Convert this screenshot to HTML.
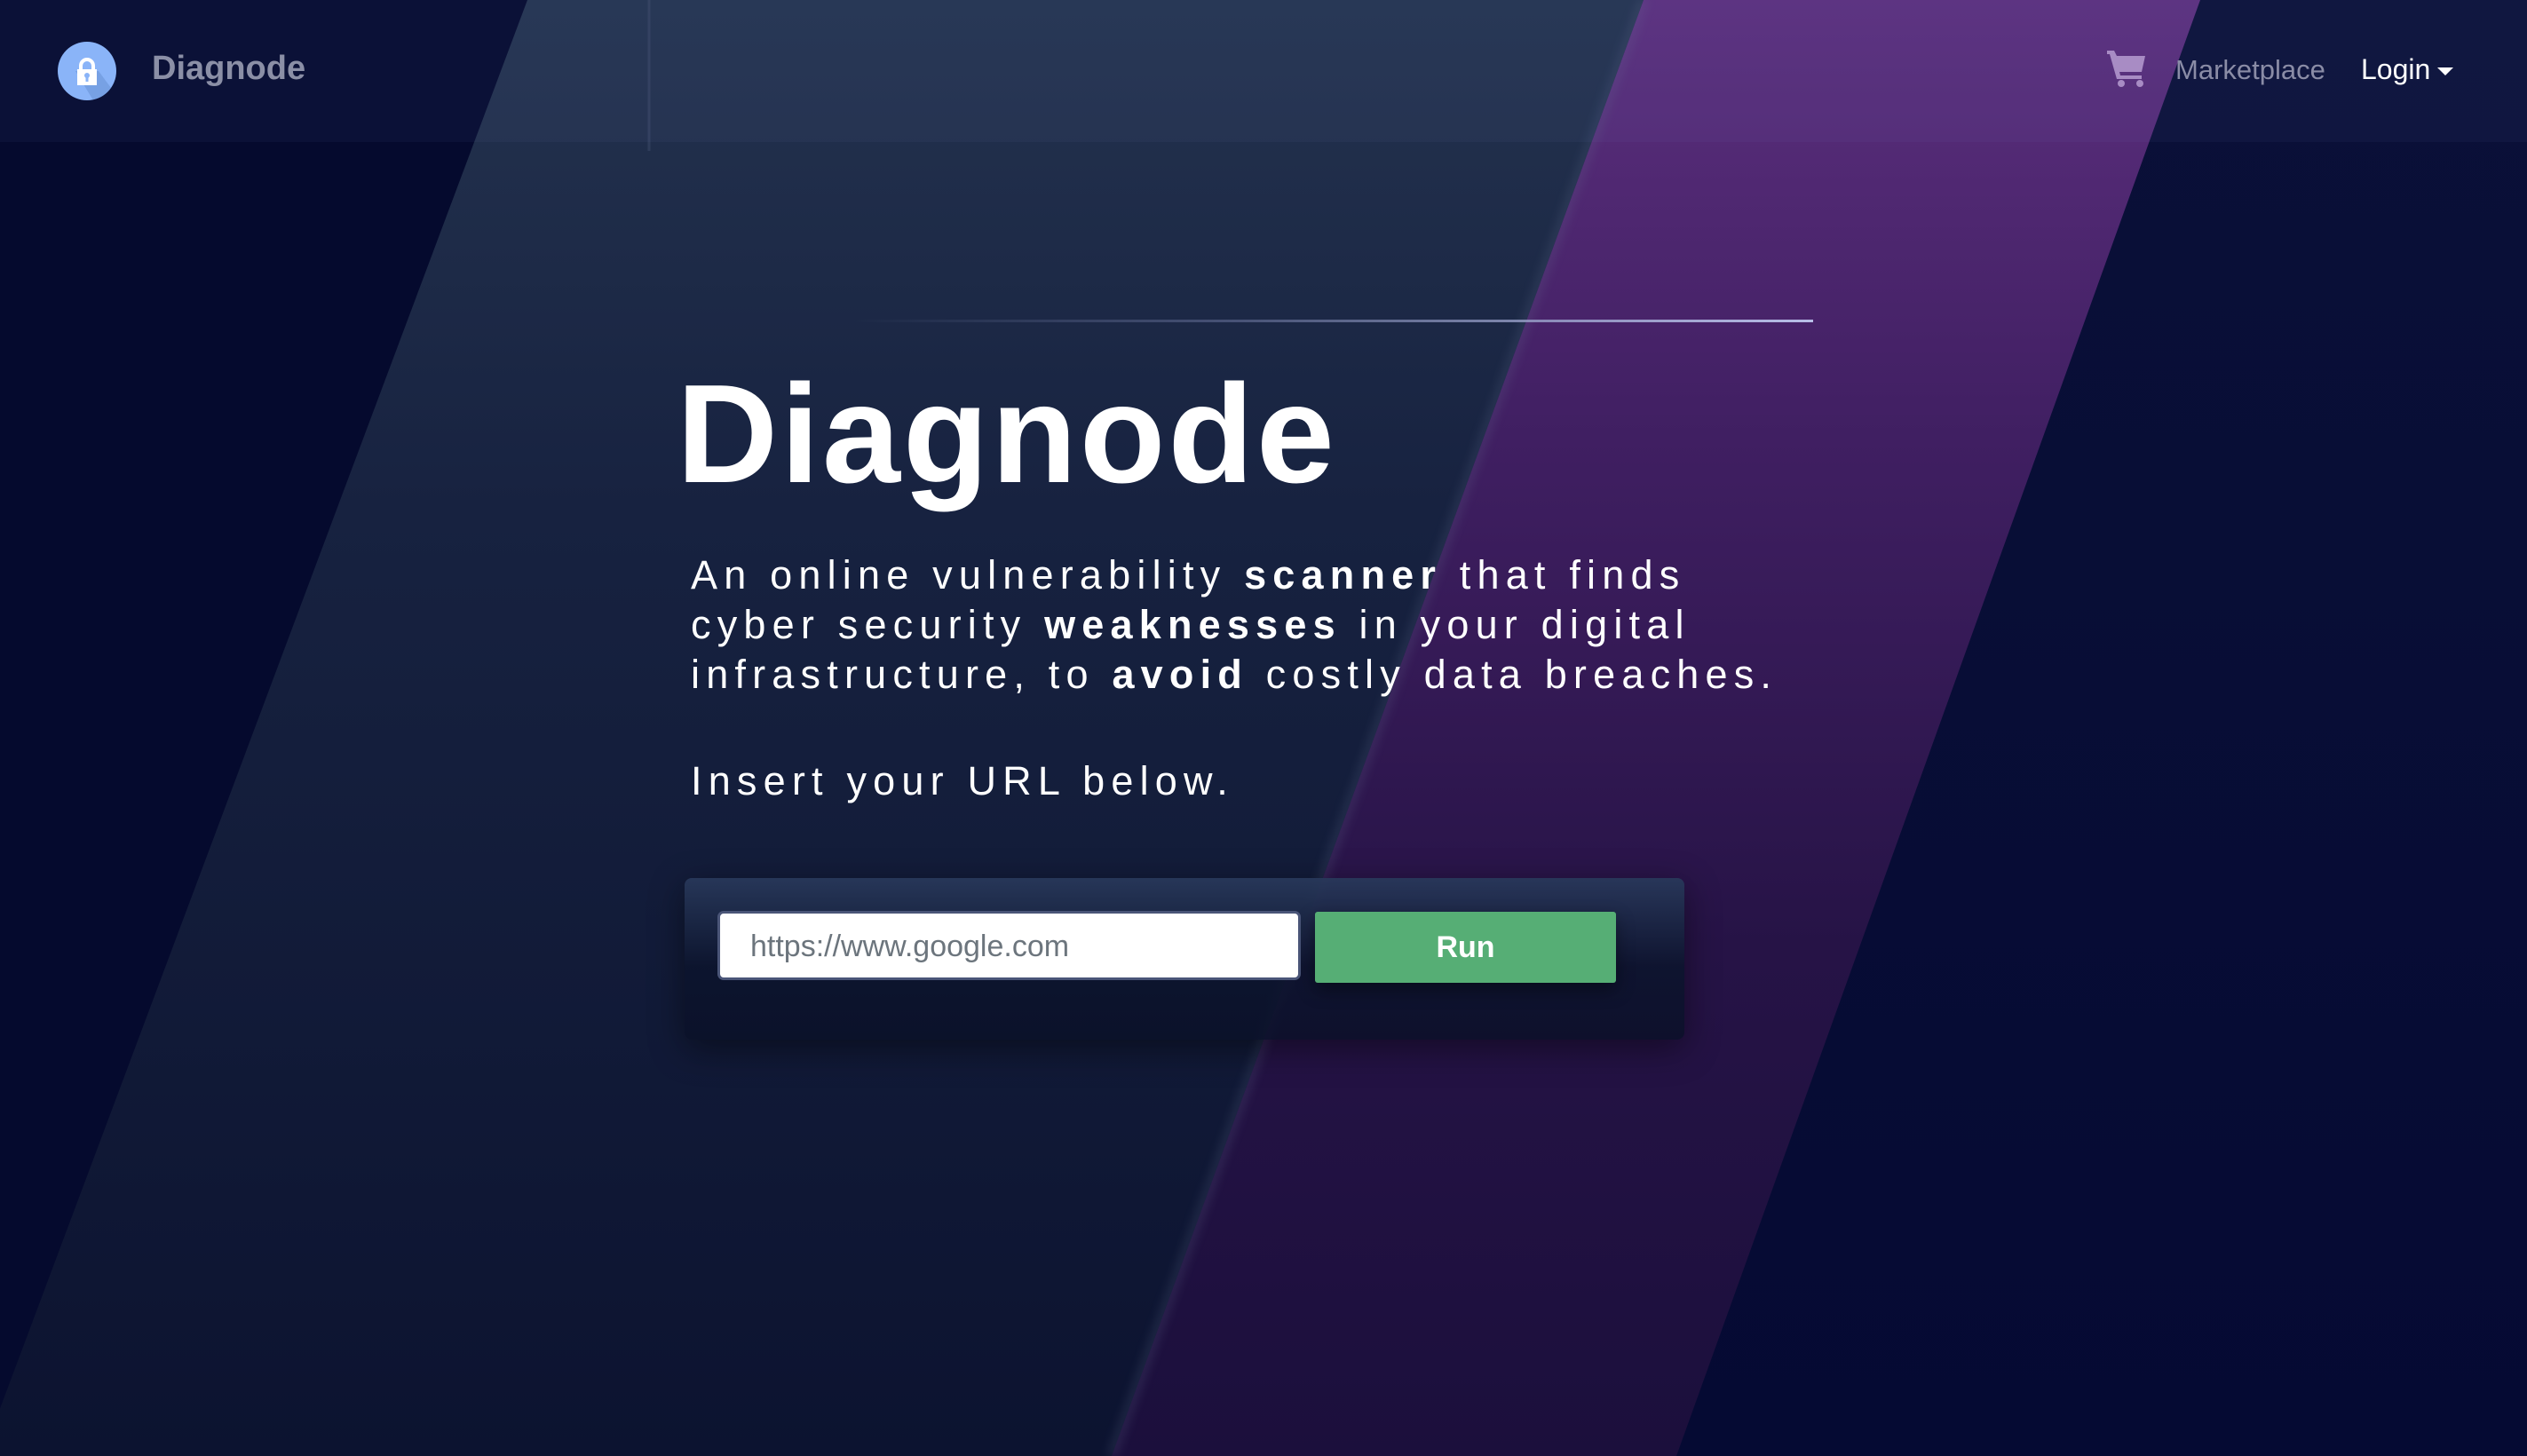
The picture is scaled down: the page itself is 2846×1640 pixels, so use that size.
<!DOCTYPE html>
<html><head><meta charset="utf-8"><style>
html,body{margin:0;padding:0;width:2846px;height:1640px;overflow:hidden;background:#050a2e;font-family:"Liberation Sans",sans-serif}
.bg{position:absolute;left:0;top:0}
.nav{position:absolute;left:0;top:0;width:2846px;height:160px;background:rgba(120,140,200,0.06)}
.logo{position:absolute;left:65px;top:47px;width:66px;height:66px;border-radius:50%;background:#8ab4f8;overflow:hidden}
.brand{position:absolute;left:171px;top:56px;font-size:38px;font-weight:bold;color:#8b8fa6}
.mk{position:absolute;left:2450px;top:61px;font-size:31px;color:#8a8ca6}
.login{position:absolute;left:2659px;top:60px;font-size:32px;color:#fff}
.caret{position:absolute;left:2745px;top:76px;width:0;height:0;border-left:9px solid transparent;border-right:9px solid transparent;border-top:9px solid #fff}
.hline{position:absolute;left:960px;top:360px;width:1082px;height:3px;background:linear-gradient(90deg,rgba(170,176,224,0),rgba(100,110,150,.6) 40%,#b8bee8)}
h1{position:absolute;left:762px;top:410px;margin:0;font-size:158px;font-weight:bold;color:#fff;letter-spacing:3px;line-height:1}
.p{position:absolute;left:778px;top:620px;font-size:45px;line-height:56px;color:#fff;letter-spacing:7.2px;white-space:nowrap}
.p b{font-weight:bold}
.ins{position:absolute;left:778px;top:854px;font-size:45px;color:#fff;letter-spacing:7.2px}
.card{position:absolute;left:771px;top:989px;width:1126px;height:182px;border-radius:8px;background:linear-gradient(180deg,rgba(40,56,90,.95),rgba(12,20,45,.9) 55%,rgba(10,16,40,.85));box-shadow:0 10px 40px rgba(0,0,0,.45)}
.inp{position:absolute;left:808px;top:1026px;width:651px;height:72px;background:#fff;border:3px solid #4a5578;border-radius:7px;box-sizing:content-box}
.inp span{position:absolute;left:34px;top:18px;font-size:34px;color:#6c757d}
.run{position:absolute;left:1481px;top:1027px;width:339px;height:80px;background:#56ae75;border-radius:3px;color:#fff;font-weight:bold;font-size:34px;text-align:center;line-height:80px;box-shadow:0 8px 20px rgba(0,0,0,.4)}
</style></head><body>
<svg class="bg" width="2846" height="1640" viewBox="0 0 2846 1640">
<defs>
<linearGradient id="lb" x1="0" y1="0" x2="0" y2="1"><stop offset="0" stop-color="#24334f"/><stop offset=".35" stop-color="#172240"/><stop offset="1" stop-color="#0c1330"/></linearGradient>
<linearGradient id="pb" x1="0" y1="0" x2="0" y2="1"><stop offset="0" stop-color="#5c2f7e"/><stop offset=".3" stop-color="#401f62"/><stop offset=".65" stop-color="#261346"/><stop offset="1" stop-color="#1b0f3c"/></linearGradient>
<linearGradient id="rb" x1="0" y1="0" x2="0" y2="1"><stop offset="0" stop-color="#0a1038"/><stop offset="1" stop-color="#050a33"/></linearGradient>
<filter id="bl"><feGaussianBlur stdDeviation="6"/></filter>
</defs>
<rect width="2846" height="1640" fill="#050a2e"/>
<polygon points="2478,0 2846,0 2846,1640 1888,1640" fill="url(#rb)"/>
<polygon points="594,0 1851,0 1252,1640 -20,1640" fill="url(#lb)"/>
<polygon points="1851,0 2478,0 1888,1640 1252,1640" fill="url(#pb)"/>
<line x1="1851" y1="0" x2="1252" y2="1640" stroke="#6a7898" stroke-width="6" opacity=".35" filter="url(#bl)"/>
<line x1="731" y1="0" x2="731" y2="170" stroke="#3a4766" stroke-width="3" opacity=".6"/>
</svg>
<div class="nav"></div>
<div class="logo"><svg width="66" height="66" viewBox="0 0 66 66"><polygon points="20,33 46,33 66,60 66,66 40,66" fill="#6f98dc" opacity=".7"/><path d="M26 32 v-5 a7 7 0 0 1 14 0 v5" fill="none" stroke="#fff" stroke-width="4"/><rect x="22" y="31" width="22" height="18" fill="#fff"/><circle cx="33" cy="38" r="3" fill="#8ab4f8"/><rect x="31.5" y="39" width="3" height="6" fill="#8ab4f8"/></svg></div>
<div class="brand">Diagnode</div>
<svg style="position:absolute;left:2372px;top:54px" width="46" height="44" viewBox="0 0 46 44"><path d="M1 3 h8 l3 6 h32 l-4 18 h-25 l1 4 h24 v4 h-28 l-8 -28 h-3z" fill="#a88cc4"/><circle cx="17" cy="40" r="4" fill="#a88cc4"/><circle cx="38" cy="40" r="4" fill="#a88cc4"/></svg>
<div class="mk">Marketplace</div>
<div class="login">Login</div>
<div class="caret"></div>
<div class="hline"></div>
<h1>Diagnode</h1>
<div class="p">An online vulnerability <b>scanner</b> that finds<br>cyber security <b>weaknesses</b> in your digital<br>infrastructure, to <b>avoid</b> costly data breaches.</div>
<div class="ins">Insert your URL below.</div>
<div class="card"></div>
<div class="inp"><span>https://www.google.com</span></div>
<div class="run">Run</div>
</body></html>
